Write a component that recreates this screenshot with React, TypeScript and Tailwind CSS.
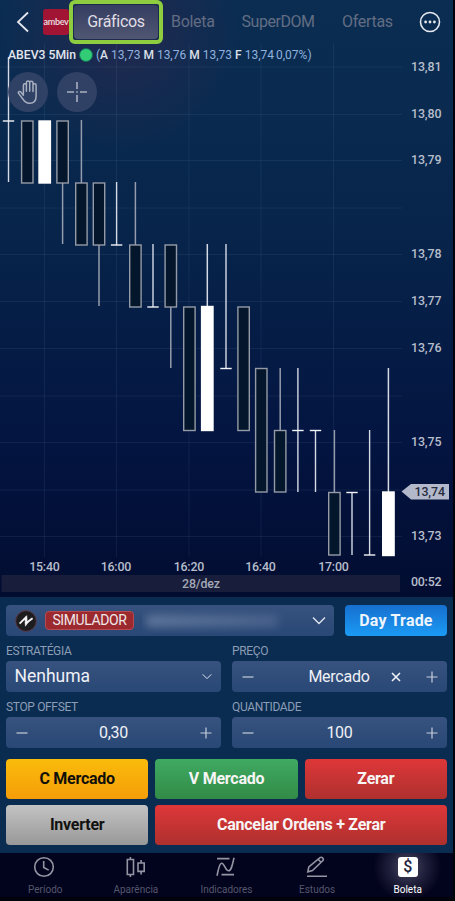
import type { ReactNode } from 'react';
import clsx from 'clsx';

type Candle = {
  x: number;
  high: number;
  low: number;
  top: number;
  bottom: number;
  kind: 'up' | 'down' | 'flat';
};

const candles: Candle[] = [
  { x: 8.5, high: 57, low: 182, top: 121, bottom: 121, kind: 'flat' },
  { x: 27.3, high: 121, low: 183, top: 121, bottom: 183, kind: 'down' },
  { x: 44.7, high: 121, low: 183, top: 121, bottom: 183, kind: 'up' },
  { x: 62.6, high: 121, low: 244, top: 121, bottom: 183, kind: 'down' },
  { x: 81.4, high: 120, low: 244, top: 183, bottom: 245, kind: 'down' },
  { x: 99, high: 183, low: 306, top: 183, bottom: 245, kind: 'down' },
  { x: 116.6, high: 182, low: 245, top: 245, bottom: 245, kind: 'flat' },
  { x: 135.4, high: 182, low: 306, top: 245, bottom: 307, kind: 'down' },
  { x: 153, high: 244, low: 307, top: 307, bottom: 307, kind: 'flat' },
  { x: 170.8, high: 245, low: 368, top: 245, bottom: 307, kind: 'down' },
  { x: 189.4, high: 307, low: 430, top: 307, bottom: 430.5, kind: 'down' },
  { x: 207.3, high: 244, low: 430, top: 306.5, bottom: 430.5, kind: 'up' },
  { x: 226, high: 244, low: 368.5, top: 368.5, bottom: 368.5, kind: 'flat' },
  { x: 243.6, high: 307, low: 430, top: 307, bottom: 430.5, kind: 'down' },
  { x: 261.3, high: 368.5, low: 492, top: 368.5, bottom: 492, kind: 'down' },
  { x: 280.2, high: 368, low: 492, top: 430.5, bottom: 492, kind: 'down' },
  { x: 297.9, high: 368, low: 492, top: 430.5, bottom: 430.5, kind: 'flat' },
  { x: 315.5, high: 430, low: 492, top: 430.5, bottom: 430.5, kind: 'flat' },
  { x: 334.4, high: 430, low: 555, top: 492.5, bottom: 555, kind: 'down' },
  { x: 352, high: 492, low: 555, top: 492.5, bottom: 492.5, kind: 'flat' },
  { x: 369.6, high: 430, low: 555, top: 555, bottom: 555, kind: 'flat' },
  { x: 388.4, high: 368, low: 555, top: 492, bottom: 555.5, kind: 'up' },
];

const gridX = [44.5, 116.5, 189, 261, 333.5];
const gridY = [67, 114.5, 160.5, 208, 254.5, 301.5, 348.5, 396, 442.5, 490, 536.5];

const prices = [
  { label: '13,81', y: 66 },
  { label: '13,80', y: 113 },
  { label: '13,79', y: 159.5 },
  { label: '13,78', y: 253.5 },
  { label: '13,77', y: 300.5 },
  { label: '13,76', y: 347.5 },
  { label: '13,75', y: 441 },
  { label: '13,73', y: 535.5 },
];

const times = [
  { label: '15:40', x: 44.5 },
  { label: '16:00', x: 116 },
  { label: '16:20', x: 189 },
  { label: '16:40', x: 260.5 },
  { label: '17:00', x: 333.5 },
];

function CandleShape({ candle }: { candle: Candle }) {
  const { x, high, low, top, bottom, kind } = candle;

  if (kind === 'flat') {
    return (
      <g stroke="#d5dae5" strokeWidth="1.4">
        <line x1={x} x2={x} y1={high} y2={low} />
        <line x1={x - 5.7} x2={x + 5.7} y1={top} y2={top} stroke="#f3f4f7" />
      </g>
    );
  }

  return (
    <g>
      <line x1={x} x2={x} y1={high} y2={low} stroke={kind === 'up' ? '#d5dae5' : '#959cab'} strokeWidth="1.5" />
      <rect
        x={x - 5.7}
        y={top}
        width="11.4"
        height={bottom - top}
        fill={kind === 'up' ? '#fff' : '#04162b'}
        stroke={kind === 'up' ? '#fff' : '#959ba6'}
        strokeWidth="1.4"
      />
    </g>
  );
}

function Chart() {
  return (
    <svg className="block h-[553px] w-[453px]" viewBox="0 44 453 553" fontFamily="Roboto, sans-serif" fontSize="12.4" fontWeight="500" fill="#b7becb">
      <g stroke="#7fa5cf" strokeOpacity="0.1">
        {gridX.map((x) => <line key={x} x1={x} x2={x} y1="44" y2="557" />)}
        {gridY.map((y) => <line key={y} x1="0" x2="402" y1={y} y2={y} />)}
      </g>
      {candles.map((candle) => <CandleShape key={candle.x} candle={candle} />)}
      {prices.map((price) => (
        <text key={price.label} x="411" y={price.y + 4.5} textLength="30.5">{price.label}</text>
      ))}
      <path d="M401.5 491.5 L411 484 H449 V499.5 H411 Z" fill="#b3b9ca" />
      <text x="414.5" y="496" textLength="30.5" fill="#262b3d">13,74</text>
      {times.map((time) => (
        <text key={time.label} x={time.x} y="571.4" textAnchor="middle" textLength="30.5">{time.label}</text>
      ))}
      <rect x="1.5" y="575" width="398.5" height="17" fill="#181d3b" />
      <text x="201" y="588.4" textAnchor="middle" textLength="38" fill="#a3a8b5">28/dez</text>
      <text x="411" y="586" textLength="30.5">00:52</text>
    </svg>
  );
}

function ToolButton({ children }: { children: ReactNode }) {
  return <div className="flex h-10 w-10 items-center justify-center rounded-full bg-[#344468]/90 text-[#a9b0c0]">{children}</div>;
}

function HandIcon() {
  return (
    <svg width="23" height="26" viewBox="0 0 23 26" fill="none" stroke="currentColor" strokeWidth="1.5" strokeLinecap="round" strokeLinejoin="round">
      <path d="M6.4 15V6.2c0-2.1 3-2.1 3 0v6V3.6c0-2.2 3.3-2.2 3.3 0v8.6V3.8c0-2.1 3.3-2.1 3.3 0v8.7V6.2c0-2 3.1-2 3.1 0v11c0 5-2.6 7.1-6.6 7.1-3.4 0-4.9-1.4-6.5-4.1L1.6 14.4c-.9-1.7 1.1-2.7 2.3-1.3l2.5 3.1" />
    </svg>
  );
}

function Legend() {
  return (
    <div className="flex h-4 items-center whitespace-nowrap text-[12px] text-[#8fb2df]">
      <span className="w-[68px] text-[12.2px] font-medium text-[#e3e6ee]">ABEV3 5Min</span>
      <span className="ml-[3px] h-3.5 w-3.5 rounded-full border border-[#116b59] bg-[#32cc77]" />
      <span className="ml-[3px]">(<b className="font-medium text-[#dce0e9]">A</b> 13,73</span>
      <span className="ml-[3px]"><b className="font-medium text-[#dce0e9]">M</b> 13,76</span>
      <span className="ml-[3px]"><b className="font-medium text-[#dce0e9]">M</b> 13,73</span>
      <span className="ml-[3px]"><b className="font-medium text-[#dce0e9]">F</b> 13,74</span>
      <span className="ml-0.5">0,07%)</span>
    </div>
  );
}

function Header() {
  return (
    <header className="flex h-11 items-center text-[16px] tracking-[-0.3px] text-[#626d83]">
      <svg className="ml-[16px] shrink-0" width="14" height="22" viewBox="0 0 14 22" fill="none" stroke="#e5e7ee" strokeWidth="1.8">
        <path d="M12 1.5 2 11l10 9.5" />
      </svg>
      <div className="ml-[13px] flex h-[26px] w-[26px] shrink-0 items-center justify-center rounded-[3px] bg-[#a11434] text-[9px] font-bold text-[#e6d3dc]" style={{ fontFamily: 'Lato, sans-serif' }}>
        <span className="-mt-px tracking-[-0.3px]">ambev</span>
      </div>
      <div className="flex h-11 w-[94px] shrink-0 items-center justify-center rounded-[6px] border-[4px] border-[#8dcd3f] p-px">
        <div className="flex h-full w-full items-center justify-center rounded-[4px] bg-gradient-to-b from-[#353d61] to-[#505773] text-[#e0dee5]">Gráficos</div>
      </div>
      <span className="ml-2 w-[44px]">Boleta</span>
      <span className="ml-[26.5px] w-[74px] tracking-[-0.45px]">SuperDOM</span>
      <span className="ml-[26.5px] w-[52px]">Ofertas</span>
      <svg className="ml-[25px] shrink-0" width="22" height="22" viewBox="0 0 22 22" fill="none" stroke="#e5e8ee" strokeWidth="1.6">
        <circle cx="11" cy="11" r="9.5" />
        <g fill="#e5e8ee" stroke="none"><circle cx="6.6" cy="11" r="1.4" /><circle cx="11" cy="11" r="1.4" /><circle cx="15.4" cy="11" r="1.4" /></g>
      </svg>
    </header>
  );
}

function Chevron({ large }: { large?: boolean }) {
  return (
    <svg width={large ? 14 : 10} height={large ? 9 : 7} viewBox="0 0 14 9" fill="none" stroke="#dfe4ee" strokeWidth="1.4">
      <path d="m1 1.5 6 6 6-6" />
    </svg>
  );
}

function Sign({ kind }: { kind: 'minus' | 'plus' | 'clear' }) {
  return (
    <svg className="shrink-0" width="12" height="12" viewBox="0 0 12 12" stroke={kind === 'clear' ? '#f0f2f6' : '#c5cdda'} strokeWidth={kind === 'clear' ? 1.6 : 1.2}>
      {kind === 'clear' ? <path d="m2 2 8 8M10 2l-8 8" /> : <path d={kind === 'plus' ? 'M.5 6h11M6 .5v11' : 'M.5 6h11'} />}
    </svg>
  );
}

function Field({ label, children }: { label: string; children: ReactNode }) {
  return (
    <div>
      <div className="h-[17px] text-[12px] leading-[14px] tracking-[-0.35px] text-[#8d9db5]">{label}</div>
      <div className="flex h-[31px] items-center rounded bg-gradient-to-b from-[#37527e] to-[#294876] px-[9.5px] text-[16px] tracking-[-0.25px] text-[#eff1f6]">{children}</div>
    </div>
  );
}

function Ticket() {
  return (
    <section className="h-64 w-[453px] bg-[#092c50] px-1.5 pt-[8px]">
      <div className="flex gap-[11px]">
        <div className="flex h-[31px] w-[328px] items-center rounded bg-gradient-to-b from-[#37527e] to-[#294876] pl-[9px] pr-2">
          <svg width="22" height="22" viewBox="0 0 22 22">
            <circle cx="11" cy="11" r="10.3" fill="#1d1d20" stroke="#64363f" strokeWidth=".8" />
            <path d="M4.6 13.6 10.6 7.6 11.4 12.8 17.6 8.2" fill="none" stroke="#f5f5f5" strokeWidth="1.8" />
            <path d="M9 10.2 11.8 5.6 12.2 10.6M10 11.4 10.4 16.2 13.8 11.6" fill="#f5f5f5" stroke="#f5f5f5" strokeWidth=".5" />
          </svg>
          <span className="ml-2 flex h-[19px] w-[89px] items-center justify-center rounded border border-[#b94950] bg-[#9b292d] text-[14px] tracking-[-0.4px] text-[#eee7ea]">SIMULADOR</span>
          <span className="ml-2 h-6 w-[152px] overflow-hidden">
            <span className="mx-1 mt-1.5 block h-3 w-[132px] rounded bg-gradient-to-r from-[#7387a8] to-[#526b93] opacity-70 blur-[4px]" />
          </span>
          <span className="ml-auto"><Chevron large /></span>
        </div>
        <button className="h-[31px] w-[102px] rounded bg-gradient-to-b from-[#176fce] to-[#1b9bf5] text-[16px] font-bold tracking-[0.2px] text-[#edf4fc]">Day Trade</button>
      </div>

      <div className="mt-2 grid grid-cols-2 gap-x-[11px] gap-y-2">
        <Field label="ESTRATÉGIA">
          <span className="-ml-px text-[17.5px] tracking-normal">Nenhuma</span>
          <span className="ml-auto"><Chevron /></span>
        </Field>
        <Field label="PREÇO">
          <Sign kind="minus" />
          <span className="ml-[40px] w-[91px] text-center">Mercado</span>
          <span className="ml-[5px] mr-auto"><Sign kind="clear" /></span>
          <Sign kind="plus" />
        </Field>
        <Field label="STOP OFFSET">
          <Sign kind="minus" />
          <span className="flex-1 text-center">0,30</span>
          <Sign kind="plus" />
        </Field>
        <Field label="QUANTIDADE">
          <Sign kind="minus" />
          <span className="flex-1 text-center">100</span>
          <Sign kind="plus" />
        </Field>
      </div>

      <div className="mt-[11px] grid grid-cols-3 gap-x-[7px] gap-y-1.5 text-[16px] font-bold tracking-[-0.25px] text-[#f7f5f5]">
        <button className="h-10 rounded bg-gradient-to-b from-[#fabb0b] to-[#f59d09] text-[#110f09]">C Mercado</button>
        <button className="h-10 rounded bg-gradient-to-b from-[#3faa62] to-[#328b47]">V Mercado</button>
        <button className="h-10 rounded bg-gradient-to-b from-[#df3739] to-[#ae302e]">Zerar</button>
        <button className="h-10 rounded bg-gradient-to-b from-[#c3c3c3] to-[#989898] text-[#111]">Inverter</button>
        <button className="col-span-2 h-10 rounded bg-gradient-to-b from-[#df3739] to-[#ae302e]">Cancelar Ordens + Zerar</button>
      </div>
    </section>
  );
}

const tabs = [
  { label: 'Período', icon: <><circle cx="11" cy="12" r="9.3" /><path d="M10.7 6v6.4l5 2.7" /></> },
  { label: 'Aparência', icon: <><path d="M3.3 4.5h6.2v15H3.3zM6.4 2v2.5m0 15V22M14 8h6.2v8.4H14zM17.1 5v3m0 8.4v3" /></> },
  { label: 'Indicadores', icon: <><path d="M3 3.6h12.5M7.5 19.6H20M3 20.8C4.5 14.8 5 8.3 7.7 8.3c2.9 0 3.3 7.5 7 7.5 2.6 0 3.8-6.4 5.3-13" /></> },
  { label: 'Estudos', icon: <><path d="m2.8 16.8 1-4.8L15 2.7q1.5-1 2.7.3 1.3 1.4 0 2.7L7.5 15.5 2.8 16.8ZM13.2 4.3l3 3.2M2 21.3h20" /></> },
  { label: 'Boleta', icon: null },
];

function TabBar() {
  return (
    <nav className="grid h-[44px] w-[453px] grid-cols-5 bg-[#02031d] text-[10px]">
      {tabs.map((tab) => (
        <div key={tab.label} className={clsx('flex flex-col items-center pt-[3px]', tab.icon ? 'text-[#55576b]' : 'bg-[radial-gradient(circle_at_50%_14px,#4b4a63_0,#201f3b_18px,#02031d_34px)] text-white')}>
          {tab.icon ? (
            <svg width="24" height="23" viewBox="0 1 24 23" fill="none" stroke="#9395a3" strokeWidth="1.6">{tab.icon}</svg>
          ) : (
            <span className="mb-[2px] mt-px flex h-5 w-5 items-center justify-center rounded-[3px] bg-white text-[16px] font-medium leading-5 text-[#22223a]">$</span>
          )}
          <span className="mt-1 leading-[14px]">{tab.label}</span>
        </div>
      ))}
    </nav>
  );
}

export default function App() {
  return (
    <div className="h-[901px] w-[455px] overflow-hidden bg-[#02020b]" style={{ fontFamily: 'Roboto, sans-serif' }}>
      <div className="h-[597px] w-[453px] bg-[radial-gradient(circle_at_120px_30px,#23294f_0,transparent_120px),linear-gradient(to_bottom,#0b2d52_0,#0a2a4f_110px,#07234a_250px,#031440_450px,#020c30_597px)]">
        <Header />
        <div className="relative">
          <Chart />
          <div className="absolute left-2 top-[3px]">
            <Legend />
            <div className="mt-[9px] flex gap-[9px]">
              <ToolButton><HandIcon /></ToolButton>
              <ToolButton>
                <svg width="20" height="20" viewBox="0 0 20 20" stroke="currentColor" strokeWidth="1.6">
                  <path d="M0 10h7M13 10h7M10 0v7M10 13v7M9.2 10h1.6" />
                </svg>
              </ToolButton>
            </div>
          </div>
        </div>
      </div>
      <Ticket />
      <TabBar />
    </div>
  );
}
